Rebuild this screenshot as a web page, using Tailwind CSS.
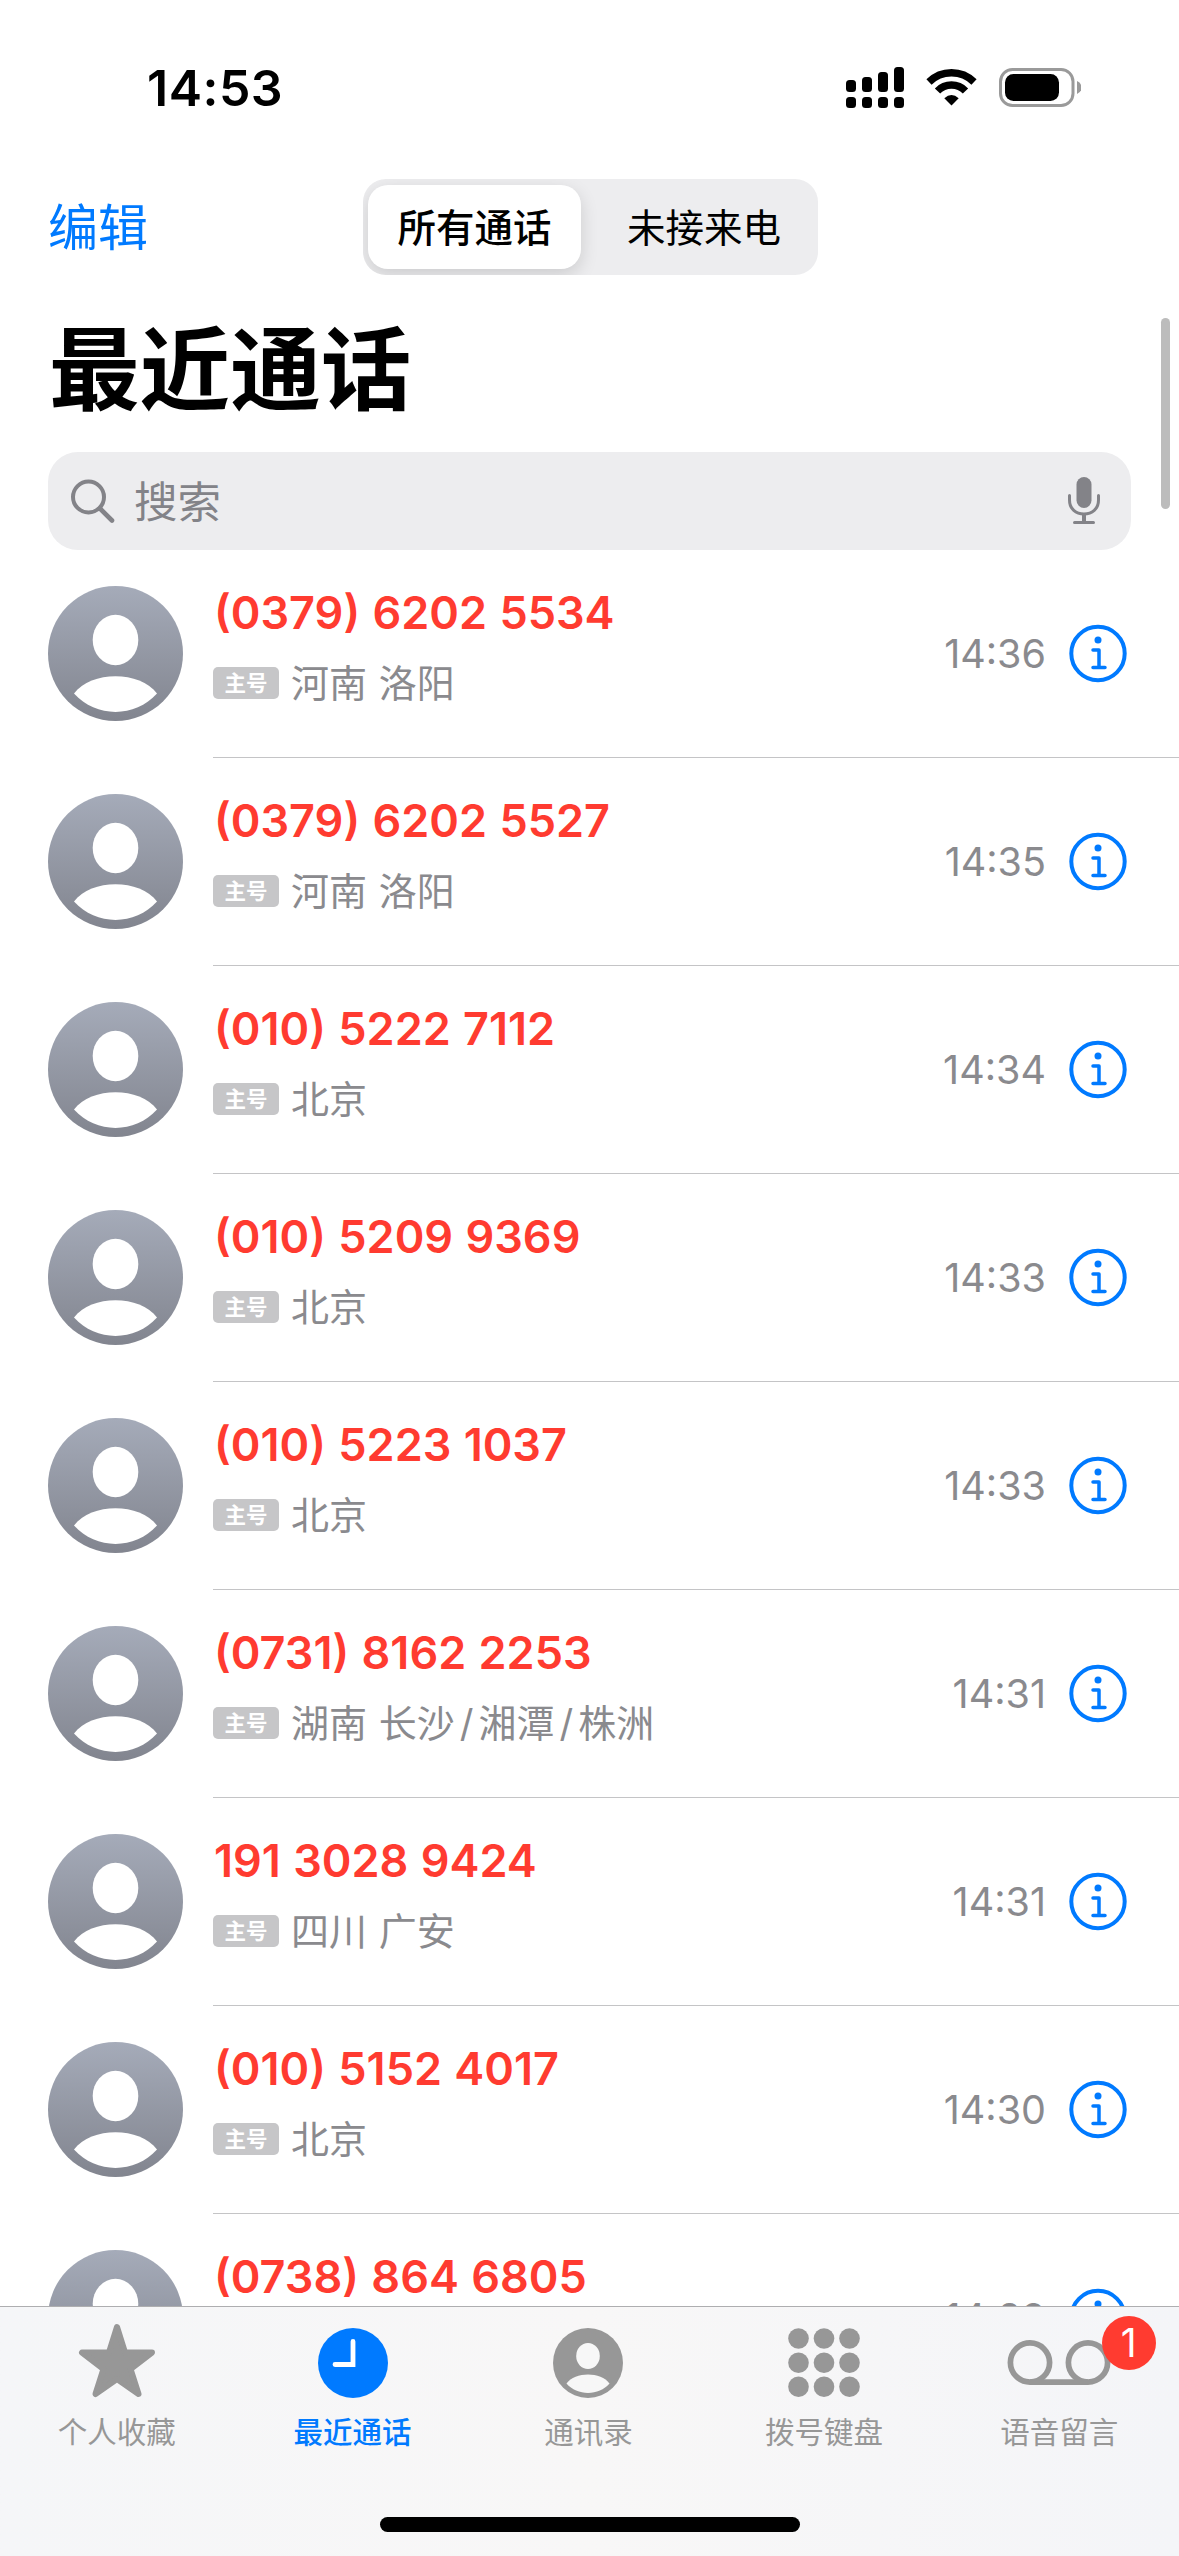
<!DOCTYPE html>
<html lang="zh-CN">
<head>
<meta charset="utf-8">
<title>最近通话</title>
<script src="https://cdn.jsdelivr.net/npm/@tailwindcss/browser@4"></script>
</head>
<body class="bg-white">
<div class="relative flex h-[2556px] w-[1179px] flex-col overflow-hidden bg-white font-['Inter','Noto_Sans_CJK_SC',sans-serif] text-black">

  <!-- Status bar -->
  <header class="flex h-[179px] shrink-0 items-start justify-between pt-[58px] pr-[98px] pl-[147px]">
    <div class="text-[50px] leading-[60px] font-semibold tracking-[0.5px]">14:53</div>
    <svg class="mt-[5px] h-[50px] w-[236px]" viewBox="845 63 236 50">
      <g>
        <rect x="846" y="80" width="10" height="12" rx="3.5"/><rect x="862" y="77" width="10" height="15" rx="3.5"/>
        <rect x="878" y="72" width="10" height="20" rx="3.5"/><rect x="894" y="67" width="10" height="25" rx="3.5"/>
        <rect x="846" y="97" width="10" height="11" rx="3.5"/><rect x="862" y="97" width="10" height="11" rx="3.5"/>
        <rect x="878" y="97" width="10" height="11" rx="3.5"/><rect x="894" y="97" width="10" height="11" rx="3.5"/>
      </g>
      <g fill="none" stroke="#000" stroke-width="7.400">
        <path d="M929 82 A32 32 0 0 1 974 82"/>
        <path d="M937.500 91 A19.500 19.500 0 0 1 965.500 91"/>
      </g>
      <path d="M951.500 105.500 L944.300 98.200 Q951.500 91.800 958.700 98.200 Z"/>
      <rect x="1000.500" y="69.500" width="72.500" height="36" rx="12" fill="none" stroke="#9a9a9a" stroke-width="3"/>
      <rect x="1005" y="74" width="54" height="27" rx="8.500"/>
      <path d="M1077 81 Q1081.500 83 1081.500 87.500 Q1081.500 92 1077 94 Z" fill="#9a9a9a"/>
    </svg>
  </header>

  <!-- Navigation -->
  <nav class="flex h-24 shrink-0 items-center pl-12">
    <div class="w-[315px] pt-[2px] text-[50px] leading-[60px] text-[#007aff]">编辑</div>
    <div class="flex h-24 w-[455px] overflow-hidden rounded-[23px] bg-[#ededef] p-[6px] pl-[5px] text-[38.500px] leading-[86px]">
      <div class="h-[84px] w-[213px] rounded-[20px] bg-white text-center font-medium shadow-[0_6px_18px_rgba(0,0,0,0.14)]">所有通话</div>
      <div class="h-[84px] flex-1 pl-[15px] text-center">未接来电</div>
    </div>
  </nav>

  <h1 class="mt-[27px] h-[136px] shrink-0 pl-[49px] text-[90.600px] leading-[136px] font-bold">最近通话</h1>

  <div class="mx-12 mt-[14px] flex h-[98px] shrink-0 items-center rounded-[30px] bg-[#ededef] pr-[28px] pl-[22px] text-[#838388]">
    <svg class="h-[48px] w-[48px]" viewBox="0 0 48 48" fill="none" stroke="currentColor" stroke-width="4" stroke-linecap="round"><circle cx="18.500" cy="20" r="15.500"/><path d="M30 31.500 L42 43.500" stroke-width="4.600"/></svg>
    <div class="ml-[16px] flex-1 pt-[2px] text-[43.500px] leading-[60px]">搜索</div>
    <svg class="h-[50px] w-[38px]" viewBox="0 0 38 50" fill="none" stroke="currentColor" stroke-width="3" stroke-linecap="round"><rect x="11.500" y="1" width="15" height="31" rx="7.500" fill="currentColor" stroke="none"/><path d="M4.500 19.500 V24 C4.500 33 11 38 19 38 C27 38 33.500 33 33.500 24 V19.500 M9.500 46.500 H28.500"/><path d="M19 38 V46" stroke-width="4" stroke-linecap="butt"/></svg>
  </div>

  <main id="calls" class="flex flex-col"></main>

  <!-- Scroll indicator -->
  <div class="absolute top-[318px] left-[1161px] h-[191px] w-[9px] rounded-full bg-[#bcbcbc]"></div>

  <!-- Tab bar -->
  <footer class="absolute inset-x-0 bottom-0 flex h-[250px] flex-col items-center border-t border-[#aeaeb0] bg-linear-to-r from-[#f5f6f8] via-[#f8f7f7] to-[#f4f5f8]">
    <div class="grid h-[210px] w-full grid-cols-5 pr-[2px] text-center text-[29.500px] leading-[40px] font-normal text-[#979797]">
      <div class="flex flex-col items-center pt-[14px] pr-[2px]">
        <svg class="h-[84px] w-[84px]" viewBox="0 0 84 84" fill="currentColor" stroke="currentColor" stroke-width="6" stroke-linejoin="round"><path d="M42 6 L50 31.500 L77 31.500 L55.500 48 L63.500 73 L42 58 L20.500 73 L28.500 48 L7 31.500 L34 31.500 Z"/></svg>
        <div class="mt-[7px]">个人收藏</div>
      </div>
      <div class="flex flex-col items-center pt-[14px] pr-[1px] text-[#007aff]">
        <svg class="h-[84px] w-[84px]" viewBox="0 0 84 84"><circle cx="42" cy="42" r="35" fill="currentColor"/><path d="M42 20.500 V43.500 H24" fill="none" stroke="#fff" stroke-width="4.800" stroke-linecap="round"/></svg>
        <div class="mt-[7px] font-medium">最近通话</div>
      </div>
      <div class="flex flex-col items-center pt-[14px]">
        <svg class="h-[84px] w-[84px]" viewBox="0 0 84 84"><circle cx="42" cy="42" r="35" fill="currentColor"/><ellipse cx="42" cy="35" rx="11.800" ry="13" fill="#f7f7f7"/><path d="M20.500 62.500 C29 50.500 55 50.500 63.500 62.500 C53 75 31 75 20.500 62.500 Z" fill="#f7f7f7"/></svg>
        <div class="mt-[7px]">通讯录</div>
      </div>
      <div class="flex flex-col items-center pt-[14px]">
        <svg class="h-[84px] w-[84px]" viewBox="0 0 84 84" fill="currentColor"><circle cx="16.500" cy="17.500" r="10.300"/><circle cx="42" cy="17.500" r="10.300"/><circle cx="67.500" cy="17.500" r="10.300"/><circle cx="16.500" cy="41.700" r="10.300"/><circle cx="42" cy="41.700" r="10.300"/><circle cx="67.500" cy="41.700" r="10.300"/><circle cx="16.500" cy="65.700" r="10.300"/><circle cx="42" cy="65.700" r="10.300"/><circle cx="67.500" cy="65.700" r="10.300"/></svg>
        <div class="mt-[7px]">拨号键盘</div>
      </div>
      <div class="relative flex flex-col items-center pt-[14px]">
        <svg class="h-[84px] w-[104px]" viewBox="0 0 104 84" fill="none" stroke="currentColor" stroke-width="5.700"><circle cx="23" cy="41.500" r="19.600"/><circle cx="81" cy="41.500" r="19.600"/><path d="M23 61.100 H81"/></svg>
        <div class="mt-[7px]">语音留言</div>
        <div class="absolute top-[9px] left-[160px] h-[54px] w-[54px] rounded-full bg-[#ff3b30] text-center text-[39px] leading-[54px] text-white">1</div>
      </div>
    </div>
    <div class="h-[15px] w-[420px] rounded-full bg-black"></div>
  </footer>
</div>

<svg width="0" height="0" class="absolute">
  <defs>
    <linearGradient id="avatarFill" x1="0" y1="0" x2="0" y2="1"><stop offset="0" stop-color="#a5abb9"/><stop offset="1" stop-color="#82858f"/></linearGradient>
  </defs>
</svg>

<script>
  const calls = [
    ["(0379) 6202 5534", "河南 洛阳", "14:36"],
    ["(0379) 6202 5527", "河南 洛阳", "14:35"],
    ["(010) 5222 7112", "北京", "14:34"],
    ["(010) 5209 9369", "北京", "14:33"],
    ["(010) 5223 1037", "北京", "14:33"],
    ["(0731) 8162 2253", "湖南 长沙/湘潭/株洲", "14:31"],
    ["191 3028 9424", "四川 广安", "14:31"],
    ["(010) 5152 4017", "北京", "14:30"],
    ["(0738) 864 6805", "湖南 张家界", "14:29"],
  ];
  document.getElementById("calls").innerHTML = calls.map(([number, place, time]) => `
    <article class="flex h-[208px] shrink-0 pl-12">
      <svg class="mt-9 h-[135px] w-[135px] shrink-0" viewBox="0 0 135 135">
        <circle cx="67.500" cy="67.500" r="67.500" fill="url(#avatarFill)"/>
        <ellipse cx="67.500" cy="54" rx="22.800" ry="25.200" fill="#fff"/>
        <path d="M26 107.500 C43 84.500 92 84.500 109 107.500 C87 132 48 132 26 107.500 Z" fill="#fff"/>
      </svg>
      <div class="ml-[30px] flex flex-1 border-b border-[#c4c4c6]">
        <div class="flex-1 pt-[34px]">
          <div class="pl-[1px] text-[45px] leading-[58px] font-semibold whitespace-nowrap text-[#ff3b30] [word-spacing:1px]">${number}</div>
          <div class="mt-[13px] flex h-[56px] items-center">
            <span class="h-8 w-[66px] rounded-[5px] bg-[#c6c6c8] text-center text-[21.500px] leading-[32px] font-bold text-white">主号</span>
            <span class="ml-[12px] text-[38px] leading-[56px] whitespace-nowrap text-[#8a8a8e] [word-spacing:1px]">${place.replaceAll("/", '<span class="px-[5px]">/</span>')}</span>
          </div>
        </div>
        <time class="pt-[79px] pr-[22px] text-[39.500px] leading-[51px] text-[#8a8a8e]">${time}</time>
        <svg class="mt-[74px] mr-[51px] h-[60px] w-[60px]" viewBox="0 0 60 60" fill="none" stroke="#007aff" stroke-linecap="round" stroke-linejoin="round">
          <circle cx="30" cy="29.500" r="26.700" stroke-width="4"/>
          <circle cx="30" cy="16" r="3.500" fill="#007aff" stroke="none"/>
          <path d="M25 26 H31 V43.500 M25 43.500 H37" stroke-width="3.500"/>
        </svg>
      </div>
    </article>`).join("");
</script>
</body>
</html>
